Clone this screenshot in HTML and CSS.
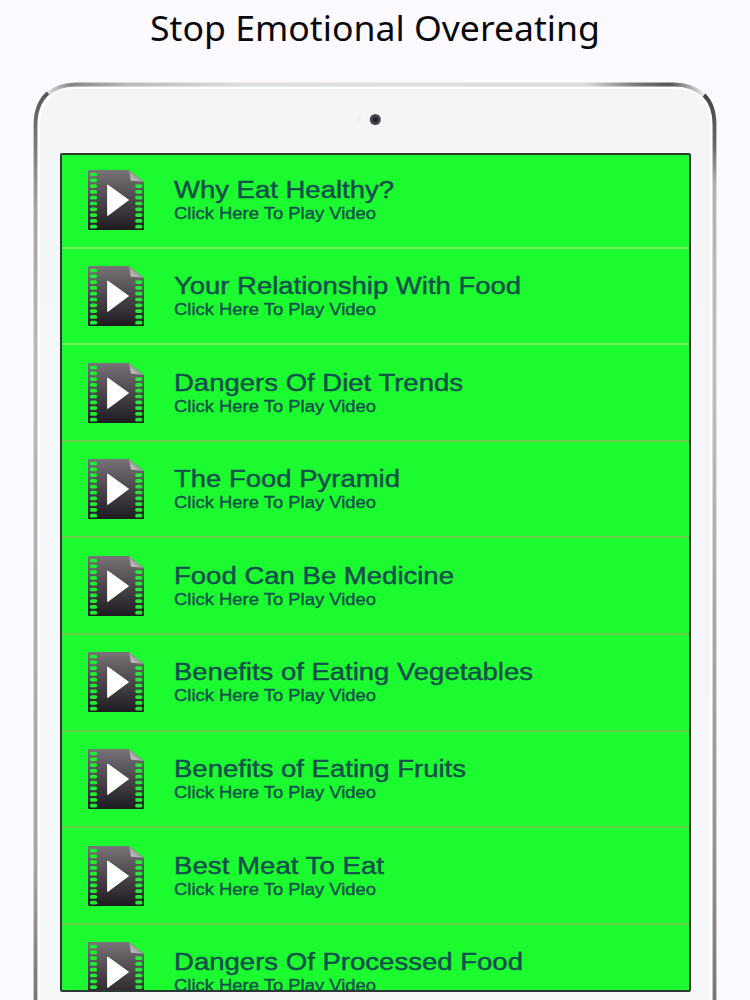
FILE: index.html
```html
<!DOCTYPE html>
<html lang="en">
<head>
<meta charset="utf-8">
<title>Stop Emotional Overeating</title>
<link rel="stylesheet" href="styles.css">
</head>
<body>
<main class="page">
  <header class="headline">
    <svg width="750" height="60"><text class="headline-text" x="150" y="40.5" textLength="450" lengthAdjust="spacingAndGlyphs">Stop Emotional Overeating</text></svg>
  </header>
  <section class="tablet">
    <svg class="bezel" width="750" height="940" viewBox="0 60 750 940" fill="none">
      <defs>
        <linearGradient id="body" x1="0" y1="82" x2="0" y2="1000" gradientUnits="userSpaceOnUse">
          <stop offset="0" stop-color="#f3f5f7"/><stop offset=".5" stop-color="#f5f6f9"/><stop offset="1" stop-color="#f6f7f8"/>
        </linearGradient>
        <linearGradient id="top" x1="48" y1="0" x2="703" y2="0" gradientUnits="userSpaceOnUse">
          <stop offset="0" stop-color="#dedede"/><stop offset=".035" stop-color="#858585"/><stop offset=".12" stop-color="#b9b9b9"/><stop offset=".3" stop-color="#dedfe1"/><stop offset=".82" stop-color="#dddddd"/><stop offset=".9" stop-color="#777"/><stop offset=".95" stop-color="#555"/><stop offset="1" stop-color="#e6e6e6"/>
        </linearGradient>
        <linearGradient id="left" x1="0" y1="92" x2="0" y2="1000" gradientUnits="userSpaceOnUse">
          <stop offset="0" stop-color="#555"/><stop offset=".05" stop-color="#777"/><stop offset=".13" stop-color="#a5a5a5"/><stop offset=".3" stop-color="#b8b9bb"/><stop offset=".85" stop-color="#a5a5a8"/><stop offset="1" stop-color="#777"/>
        </linearGradient>
        <linearGradient id="right" x1="0" y1="94" x2="0" y2="1000" gradientUnits="userSpaceOnUse">
          <stop offset="0" stop-color="#444"/><stop offset=".055" stop-color="#666"/><stop offset=".1" stop-color="#b2b2b4"/><stop offset=".3" stop-color="#bfc0c2"/><stop offset=".85" stop-color="#929292"/><stop offset="1" stop-color="#777"/>
        </linearGradient>
      </defs>
      <path d="M35 1010V125Q35 84 76 84H674Q715 84 715 125V1010Z" fill="url(#body)"/>
      <path d="M39 1010V126Q39 88 76 88H674Q711 88 711 126V1010" stroke="#fff" stroke-width="2"/>
      <path d="M48 94Q58 84.500 76 84.500H674Q692 84.500 703 95" stroke="url(#top)" stroke-width="3.800"/>
      <path d="M48 93Q35.500 104 35.500 125V1010" stroke="url(#left)" stroke-width="3.800"/>
      <path d="M704 95Q714.500 105 714.500 125V1010" stroke="url(#right)" stroke-width="3.800"/>
      <circle cx="359" cy="119.500" r="2" fill="#ebecee"/>
      <circle cx="375.300" cy="119.500" r="5.500" fill="#42464b"/>
      <circle cx="375.300" cy="119.500" r="2.600" fill="#202329"/>
    </svg>
    <div class="screen">
      <svg class="defs" width="0" height="0">
        <defs>
          <linearGradient id="film" x1="0" y1="0" x2="0" y2="1">
            <stop offset="0" stop-color="#777377"/><stop offset=".5" stop-color="#4b464b"/><stop offset="1" stop-color="#1e1b20"/>
          </linearGradient>
          <linearGradient id="fold" x1="0" y1="1" x2="1" y2="0">
            <stop offset="0" stop-color="#dedede"/><stop offset=".6" stop-color="#858a86"/>
          </linearGradient>
          <symbol id="video" viewBox="0 0 56 60">
            <path d="M0 1Q0 0 1 0H41L56 12V59Q56 60 55 60H1Q0 60 0 59Z" fill="url(#film)"/>
            <path d="M3.700 4.500H7.300M3.700 10.300H7.300M3.700 16.100H7.300M3.700 21.900H7.300M3.700 27.700H7.300M3.700 33.500H7.300M3.700 39.300H7.300M3.700 45.100H7.300M3.700 50.900H7.300M3.700 56.700H7.300M49 16.100H52.600M49 21.900H52.600M49 27.700H52.600M49 33.500H52.600M49 39.300H52.600M49 45.100H52.600M49 50.900H52.600M49 56.700H52.600" stroke="#1fee33" stroke-width="3.700" stroke-linecap="round" fill="none"/>
            <path d="M41 0L56 12L43 10.500Z" fill="url(#fold)"/>
            <path d="M19.700 15V45.500L40.500 30Z" fill="#fff" stroke="#fff" stroke-linejoin="round"/>
          </symbol>
        </defs>
      </svg>
      <ul class="list" id="list"></ul>
    </div>
  </section>
</main>
<script src="list.js"></script>
</body>
</html>
```
FILE: styles.css
```css
body {
  margin: 0;
  background: #fcfafe;
}

.page {
  width: 750px;
  height: 1000px;
  overflow: hidden;
}

.headline {
  height: 60px;
}

.headline-text {
  font: 35px "Noto Sans", sans-serif;
  fill: #09090c;
}

.tablet {
  position: relative;
  box-sizing: border-box;
  height: 940px;
  padding: 92.5px 59px 0 60px;
}

.bezel {
  position: absolute;
  inset: 0;
}

.screen {
  position: relative;
  box-sizing: border-box;
  height: 839.5px;
  border: 2px solid #2b3a35;
  border-radius: 2px;
  background: #1cfb2f;
  overflow: hidden;
}

.defs {
  position: absolute;
}

.list {
  margin: -2.5px 0 0;
  padding: 0;
  list-style: none;
}

.row {
  display: flex;
  align-items: flex-start;
  box-sizing: border-box;
  height: 96.6px;
  padding: 17.5px 0 0 26px;
  gap: 26px;
  border-bottom: 2px solid #6ccb45;
}

.row:nth-child(-n+2) {
  border-bottom-color: #79ed4d;
}

.icon {
  width: 56px;
  height: 60px;
  flex: none;
}

.label {
  width: 440px;
  height: 64px;
  overflow: visible;
}

.title,
.subtitle {
  font-family: "Liberation Sans", Arial, sans-serif;
  fill: #12504c;
  stroke: #12504c;
}

.title {
  font-size: 23.5px;
  stroke-width: 0.45px;
}

.subtitle {
  font-size: 16px;
  stroke-width: 0.35px;
}
```
FILE: list.js
```js
const videos = [
  ["Why Eat Healthy?", 220],
  ["Your Relationship With Food", 347],
  ["Dangers Of Diet Trends", 289],
  ["The Food Pyramid", 226],
  ["Food Can Be Medicine", 280],
  ["Benefits of Eating Vegetables", 359],
  ["Benefits of Eating Fruits", 292],
  ["Best Meat To Eat", 210],
  ["Dangers Of Processed Food", 349]
];

document.getElementById("list").innerHTML = videos.map(([title, width]) => `
  <li class="row">
    <svg class="icon"><use href="#video"/></svg>
    <svg class="label">
      <text class="title" x="4" y="28.300" textLength="${width}" lengthAdjust="spacingAndGlyphs">${title}</text>
      <text class="subtitle" x="4" y="49.300" textLength="202" lengthAdjust="spacingAndGlyphs">Click Here To Play Video</text>
    </svg>
  </li>`).join("");
```
